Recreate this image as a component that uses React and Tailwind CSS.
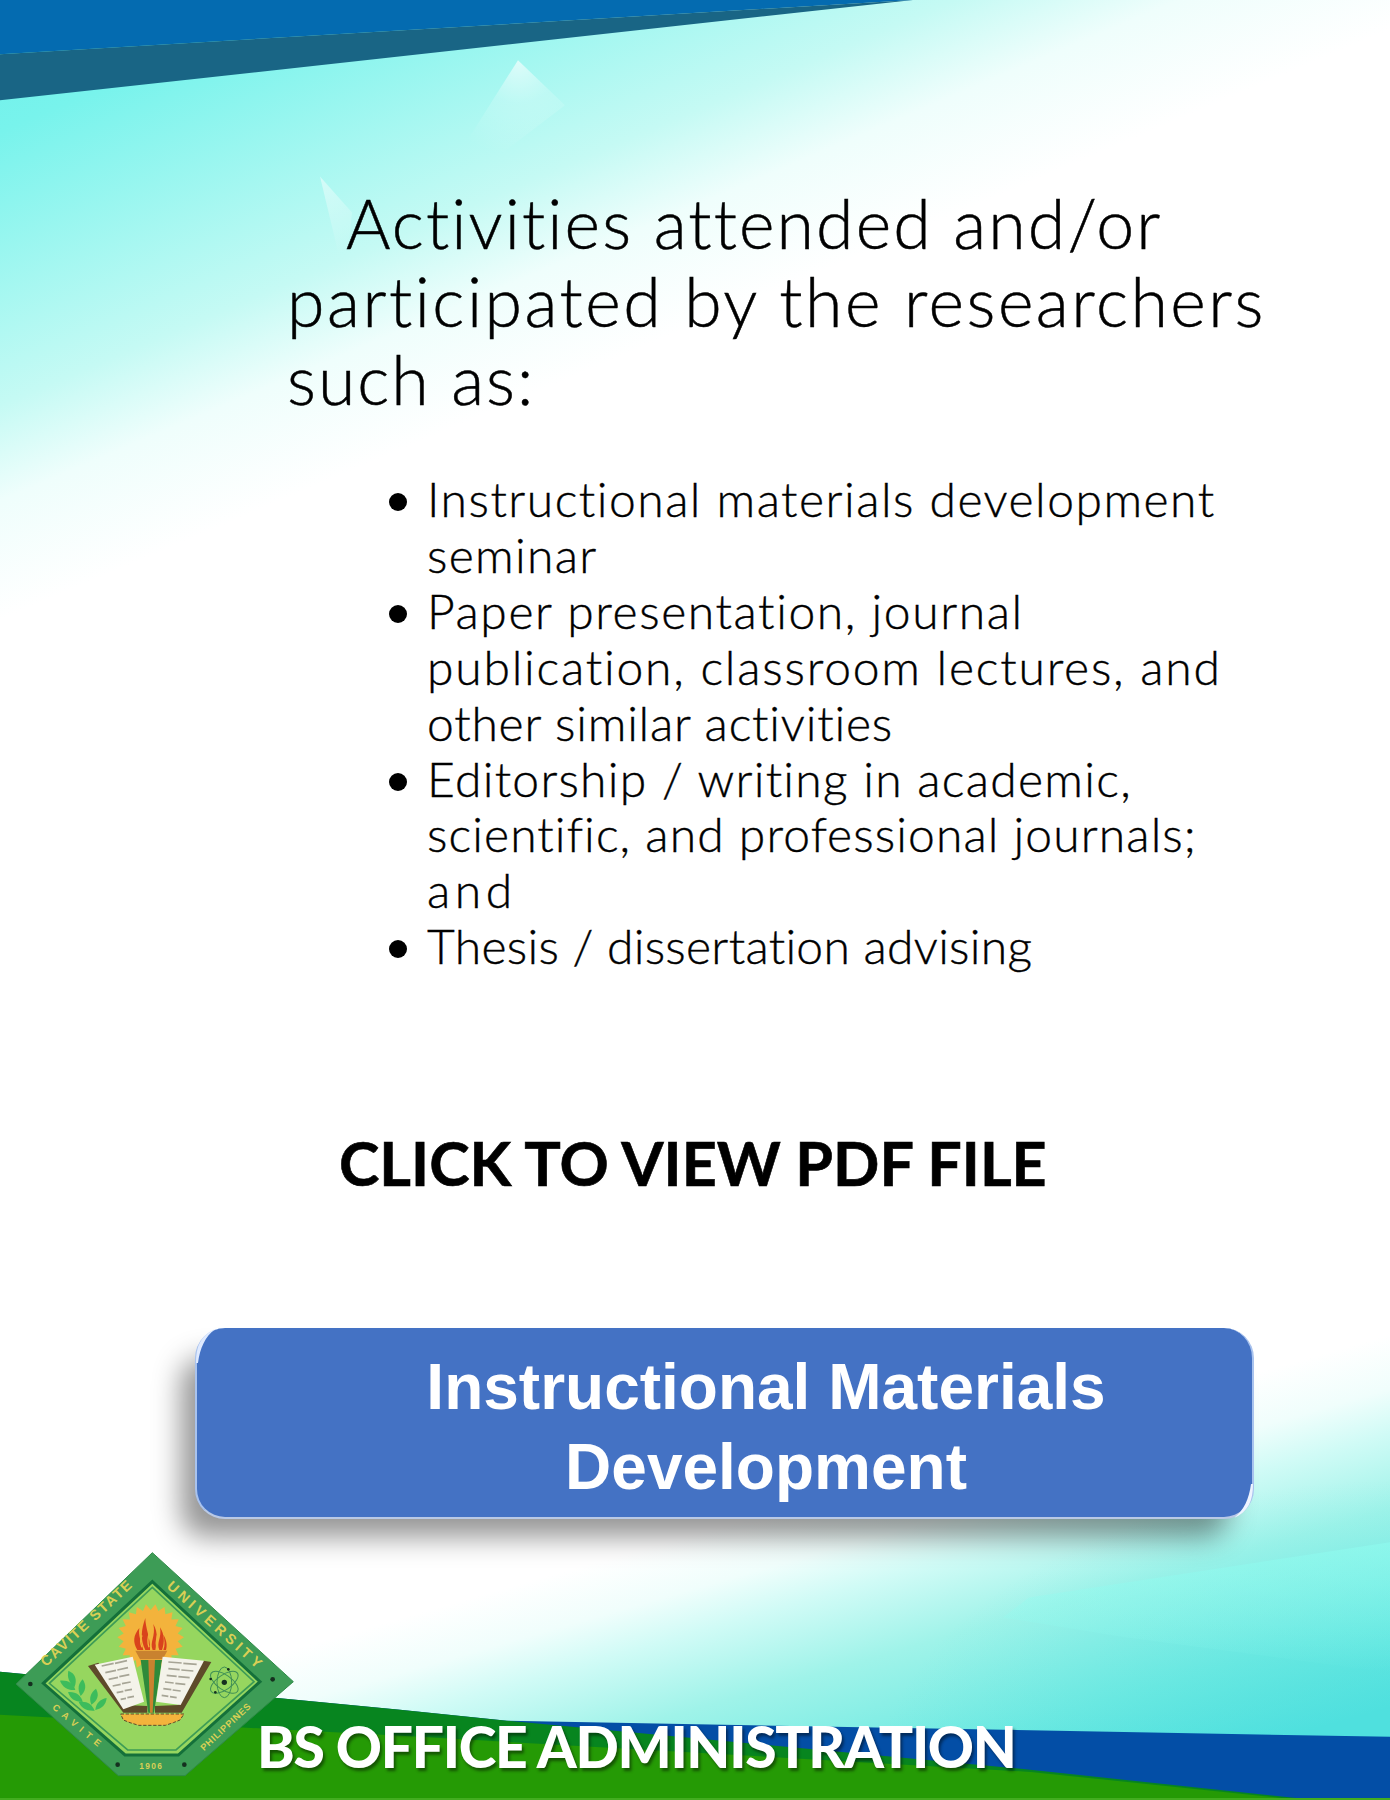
import React from 'react';

const gothic = "font-['Lato','Noto_Sans',sans-serif]";

// sun rays behind the torch
const sunPoints = Array.from({ length: 44 }, (_, i) => {
  const r = i % 2 === 0 ? 100 : 82;
  const a = (i / 44) * Math.PI * 2;
  return `${(452 + r * Math.cos(a)).toFixed(1)},${(322 + r * Math.sin(a)).toFixed(1)}`;
}).join(' ');

const Background = () => (
  <svg className="absolute inset-0 w-full h-full" viewBox="0 0 1390 1795" preserveAspectRatio="none">
    <defs>
      <radialGradient id="glowA" gradientUnits="userSpaceOnUse" cx="518" cy="60" r="95">
        <stop offset="0" stopColor="#fff" stopOpacity="0.65" />
        <stop offset="0.45" stopColor="#fff" stopOpacity="0.2" />
        <stop offset="1" stopColor="#fff" stopOpacity="0" />
      </radialGradient>
      <radialGradient id="glowB" gradientUnits="userSpaceOnUse" cx="320" cy="176" r="80">
        <stop offset="0" stopColor="#fff" stopOpacity="0.5" />
        <stop offset="1" stopColor="#fff" stopOpacity="0" />
      </radialGradient>
      <linearGradient id="sweep" x1="0" y1="0" x2="0" y2="1">
        <stop offset="0" stopColor="#8ffdf0" stopOpacity="0.55" />
        <stop offset="1" stopColor="#8ffdf0" stopOpacity="0" />
      </linearGradient>
    </defs>

    {/* light rays */}
    <polygon points="518,60 565,105 420,215" fill="url(#glowA)" />
    <polygon points="320,176 352,212 345,280" fill="url(#glowB)" />
    <polygon points="1003,1613 1029,1593 1390,1538 1390,1668 1120,1632" fill="url(#sweep)" />

    {/* top banner */}
    <polygon points="0,0 913,0 0,54" fill="#046bb0" />
    <polygon points="0,54 913,0 0,100" fill="#196585" />

    {/* bottom bands */}
    <polygon points="0,1667 400,1705 507,1716 1390,1732 1390,1795 0,1795" fill="#034ea6" />
    <polygon points="0,1667 400,1705 507,1716 1012,1763 1315,1795 0,1795" fill="#07851f" />
    <polygon points="0,1710 420,1732 1031,1767 1300,1795 0,1795" fill="#259a05" />
    <rect x="0" y="1793" width="1390" height="2" fill="#43ad20" />
  </svg>
);

const Logo = () => (
  <svg className="absolute left-0 top-[1530px]" width="420" height="270" viewBox="0 0 1260 810">
    {/* badge */}
    <polygon points="457,68 880,455 555,737 355,737 48,462" fill="#3d9c56" stroke="#2f8a48" strokeWidth="3" strokeLinejoin="round" />
    <polygon points="457,155 780,455 535,675 375,675 130,460" fill="#96d65f" stroke="#14703a" strokeWidth="9" />
    <polygon points="457,172 762,455 528,660 383,660 148,460" fill="none" stroke="#3d9c56" strokeWidth="5" />

    {/* rim dots */}
    <circle cx="91" cy="462" r="7" fill="#15301f" />
    <circle cx="818" cy="448" r="7" fill="#15301f" />
    <circle cx="353" cy="704" r="7" fill="#15301f" />
    <circle cx="553" cy="704" r="7" fill="#15301f" />

    {/* rim lettering */}
    <g fill="#d9cf55" fontFamily="'Liberation Sans', sans-serif" fontWeight="700" fontSize="43">
      <text transform="translate(138,412) rotate(-43)" letterSpacing="5">CAVITE STATE</text>
      <text transform="translate(498,172) rotate(42)" letterSpacing="12">UNIVERSITY</text>
      <text transform="translate(155,535) rotate(40)" fontSize="28" letterSpacing="16">CAVITE</text>
      <text transform="translate(612,664) rotate(-43)" fontSize="28" letterSpacing="2">PHILIPPINES</text>
      <text x="418" y="716" fontSize="25" letterSpacing="4">1906</text>
    </g>

    <polygon points={sunPoints} fill="#f3b33c" />

    {/* flame */}
    <g fill="#d9431c">
      <path d="M412 360c-14-24-12-44 6-66-4 24 6 40 12 66z" />
      <path d="M436 360c-16-32-12-62 0-96 0 32 16 60 14 96z" />
      <path d="M458 360c-10-24 10-40 2-78 16 28 10 54 6 78z" />
      <path d="M478 360c-10-22 8-36 2-68 14 22 14 46 6 68z" />
      <path d="M490 360c6-16 4-30 0-46 10 16 12 32 8 46z" />
    </g>
    <g fill="none" stroke="#f3b33c" strokeWidth="4">
      <path d="M426 352c-6-14-6-24 0-36" />
      <path d="M447 352c-6-18-4-30 2-46" />
      <path d="M470 352c-4-14 0-24 2-36" />
    </g>

    {/* torch */}
    <polygon points="406,362 502,362 488,388 420,388" fill="#c9822f" />
    <polygon points="422,390 486,390 462,548 445,548" fill="#2f8a3a" />
    <polygon points="445,390 465,390 458,548 450,548" fill="#c9822f" />

    {/* book */}
    <polygon points="264,408 295,398 370,525 442,528 442,548 370,548" fill="#5e4a2a" />
    <polygon points="634,396 610,392 535,525 465,528 465,548 545,548" fill="#5e4a2a" />
    <polygon points="284,404 398,380 432,515 370,538" fill="#f4f3ea" />
    <polygon points="488,380 612,392 542,525 468,515" fill="#f4f3ea" />
    <g stroke="#a7a596" strokeWidth="5">
      <path d="M305 408l36-8 M345 400l36-8 M316 428l32-7 M352 420l32-7 M326 448l28-6 M358 440l30-6 M338 468l24-5 M366 461l26-5 M350 488l20-4 M374 482l22-4 M362 508l16-3 M382 503l20-4" />
      <path d="M505 396l40 3 M550 400l40 3 M505 416l34 3 M544 420l36 3 M500 436l30 3 M535 440l34 3 M495 456l26 3 M526 460l30 3 M490 476l24 3 M518 480l24 3 M485 496l20 3 M510 500l20 3" />
    </g>

    {/* gear */}
    <path d="M362 552h190l-12 18-20 8-24 8h-80l-26-8-20-8z" fill="#f3b33c" stroke="#5e4a2a" strokeWidth="3" strokeDasharray="10 5" />

    {/* atom */}
    <g fill="none" stroke="#3f8f55" strokeWidth="3">
      <ellipse cx="673" cy="457" rx="48" ry="22" transform="rotate(35 673 457)" />
      <ellipse cx="673" cy="457" rx="48" ry="22" transform="rotate(-35 673 457)" />
      <ellipse cx="673" cy="457" rx="22" ry="46" />
    </g>
    <g fill="#15301f">
      <circle cx="673" cy="457" r="8" />
      <circle cx="685" cy="418" r="4" />
      <circle cx="632" cy="447" r="4" />
      <circle cx="646" cy="487" r="4" />
    </g>

    {/* corn plant */}
    <g fill="#3cbc5c">
      <path d="M205 422c20 8 28 26 18 50-16-14-22-30-18-50z" />
      <path d="M180 452c24-2 40 8 46 28-22 2-38-8-46-28z" />
      <path d="M248 448c12 18 10 34-6 50-10-20-8-36 6-50z" />
      <path d="M204 486c24-2 40 10 44 30-24 0-38-10-44-30z" />
      <path d="M288 476c10 18 6 34-14 48-8-20-2-36 14-48z" />
      <path d="M236 516c24-4 40 6 48 26-24 2-40-8-48-26z" />
      <path d="M320 504c-2 20-14 32-34 36 2-20 14-32 34-36z" />
    </g>
  </svg>
);

const bullets = [
  [
    ['Instructional materials development', 'tracking-[1.5px]'],
    ['seminar', 'tracking-[1.3px]'],
  ],
  [
    ['Paper presentation, journal', 'tracking-[1.6px]'],
    ['publication, classroom lectures, and', 'tracking-[1.8px]'],
    ['other similar activities', 'tracking-[0.8px]'],
  ],
  [
    ['Editorship / writing in academic,', 'tracking-[1.3px]'],
    ['scientific, and professional journals;', 'tracking-[1.1px]'],
    ['and', 'tracking-[4.5px]'],
  ],
  [['Thesis / dissertation advising', 'tracking-[0.3px]']],
];

export default function App() {
  return (
    <div className="relative w-[1390px] h-[1800px] bg-white overflow-hidden">
      <div className="absolute top-0 left-0 right-0 h-[1795px] bg-[radial-gradient(ellipse_520px_320px_at_1390px_1800px,rgba(79,224,222,0.55)_0%,rgba(79,224,222,0)_100%),linear-gradient(344deg,#4fe0de_4%,#70eae2_8%,#9ff3e9_13%,#d0fbf6_16.5%,#f0fefc_18.5%,rgba(255,255,255,0)_21%),linear-gradient(157deg,#6cf0ea_0%,#78f3ec_5.5%,#c5faf4_17%,#effefc_21%,#ffffff_26%,#ffffff_100%)]" />
      <Background />
      <Logo />

      <main className="relative flex flex-col text-black">
        <section className={`pt-[184px] pl-[287px] ${gothic}`}>
          <h1 className="text-[68px] leading-[78px] font-light [-webkit-text-stroke:0.5px_#000]">
            <span className="block pl-[59px] tracking-[2.1px]">Activities attended and/or</span>
            <span className="block tracking-[2.5px]">participated by the researchers</span>
            <span className="block tracking-[2px]">such as:</span>
          </h1>
        </section>

        <ul className={`mt-[53px] ml-[427px] text-[48px] leading-[55.9px] font-light [-webkit-text-stroke:0.4px_#000] ${gothic}`}>
          {bullets.map((lines, i) => (
            <li key={i} className="relative">
              <span className="absolute left-[-38px] top-[22px] w-[18px] h-[18px] rounded-full bg-black" />
              {lines.map(([line, tracking]) => (
                <span key={line} className={`block whitespace-nowrap ${tracking}`}>{line}</span>
              ))}
            </li>
          ))}
        </ul>

        <h2 className={`mt-[152px] ml-[339px] text-[61px] leading-[74px] font-bold whitespace-nowrap [-webkit-text-stroke:0.6px_#000] ${gothic}`}>
          CLICK TO VIEW PDF FILE
        </h2>

        <div className="relative mt-[128px] ml-[195px] w-[1059px] h-[191px] rounded-[30px] bg-[#4472c4] border-x-2 border-x-[#a9c3ee] border-b-2 border-b-[#b9c9e6] shadow-[-20px_24px_28px_-6px_rgba(0,0,0,0.42)] flex items-center justify-center pl-[83px] pt-[8px] font-['Liberation_Sans',Arial,sans-serif] font-bold text-white text-[64px] leading-[80px] text-center">
          {/* corner glints */}
          <svg className="absolute left-[-2px] top-0" width="24" height="36" viewBox="0 0 24 36">
            <path d="M1 35C1 18 6 7 20 1 10 9 5 20 3 35z" fill="#dfeaff" />
          </svg>
          <svg className="absolute right-[-2px] bottom-[-2px]" width="24" height="36" viewBox="0 0 24 36">
            <path d="M23 1c0 17-5 28-19 34 10-8 15-19 17-34z" fill="#eef4ff" />
          </svg>
          <div>
            Instructional Materials
            <br />
            Development
          </div>
        </div>
      </main>

      <div className="absolute left-[257px] top-[1712px] font-['Lato','Noto_Sans',sans-serif] font-black text-[57px] leading-[68px] tracking-[-1.3px] text-white whitespace-nowrap [text-shadow:2px_3px_3px_rgba(0,0,0,0.45)]">
        BS OFFICE ADMINISTRATION
      </div>
    </div>
  );
}
